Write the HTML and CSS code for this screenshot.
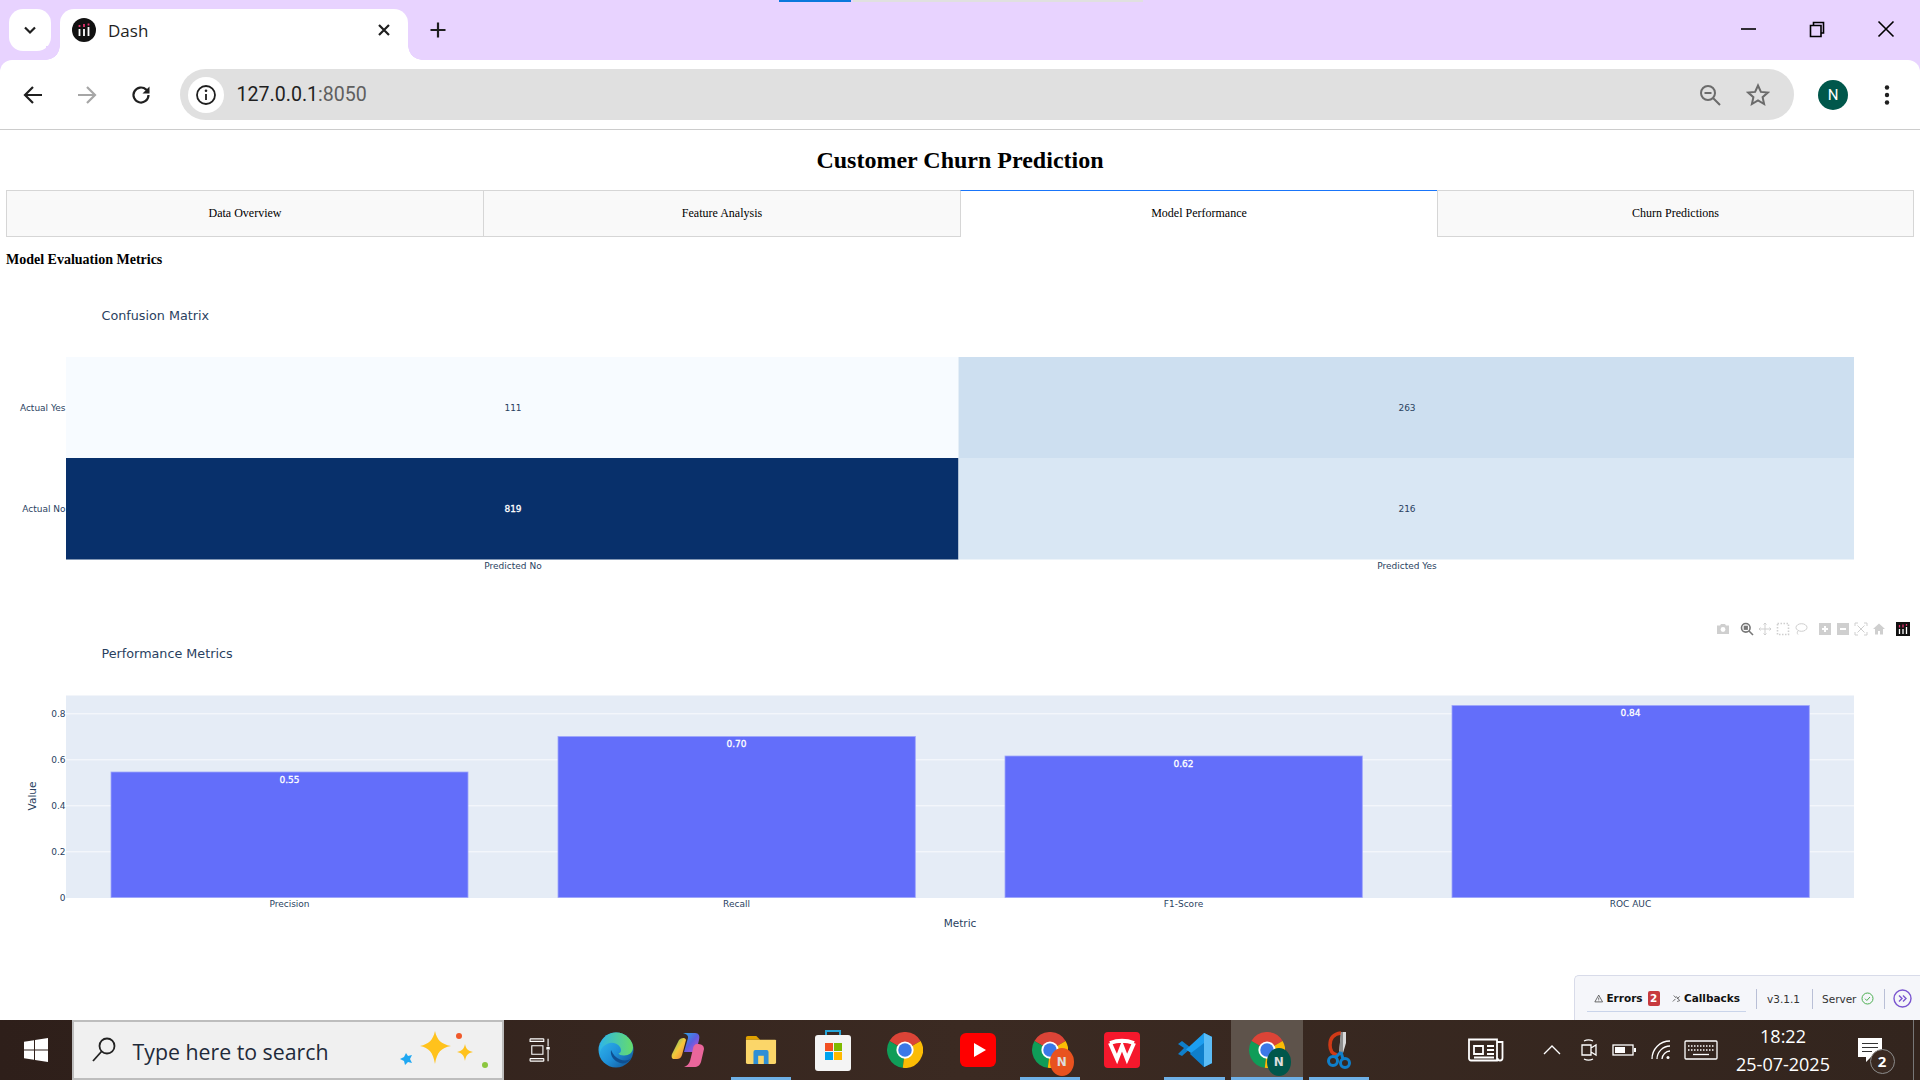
FILE: index.html
```html
<!DOCTYPE html>
<html lang="en">
<head>
<meta charset="utf-8">
<title>Dash</title>
<link rel="stylesheet" href="styles.css">
</head>
<body>
<svg class="defs" width="0" height="0" aria-hidden="true">
  <defs>
    <symbol id="chrome" viewBox="0 0 48 48">
      <path fill="#db4437" d="M24 24L3.2 12A24 24 0 0 1 44.8 12Z"/>
      <path fill="#0f9d58" d="M24 24L3.2 12A24 24 0 0 0 21 47.8Z"/>
      <path fill="#fbbc05" d="M24 24L44.8 12A24 24 0 0 1 21 47.8Z"/>
      <circle cx="24" cy="24" r="11.5" fill="#fff"/>
      <circle cx="24" cy="24" r="9" fill="#3b78e7"/>
    </symbol>
    <symbol id="dash" viewBox="0 0 24 24">
      <circle cx="12" cy="12" r="12" fill="#111"/>
      <path stroke="#fff" stroke-width="1.8" d="M7.5 11v7M12 11v7M16.500 9v9"/>
      <path stroke="#e6336f" stroke-width="1.8" d="M7.500 7v2M12 6v3M16.500 5.500v2"/>
    </symbol>
  </defs>
</svg>

<header class="tabstrip">
  <div class="progress"><span class="progress-done"></span><span class="progress-rest"></span></div>
  <button class="tab-search">
    <svg width="16" height="16" viewBox="0 0 16 16"><path class="ic-dark" d="M3 5.500l5 5 5-5"/></svg>
  </button>
  <div class="tab">
    <svg class="tab-fav" width="24" height="24"><use href="#dash"/></svg>
    <span class="tab-title">Dash</span>
    <svg class="tab-close" width="14" height="14" viewBox="0 0 14 14"><path class="ic-dark" d="M2 2l10 10M12 2L2 12"/></svg>
  </div>
  <svg class="tab-new" width="20" height="20" viewBox="0 0 20 20"><path class="ic-dark" d="M10 2.500v15M2.500 10h15"/></svg>
  <div class="winctl">
    <span class="winbtn"><svg width="18" height="18" viewBox="0 0 18 18"><path class="ic-win" d="M2 9h15"/></svg></span>
    <span class="winbtn"><svg width="18" height="18" viewBox="0 0 18 18"><path class="ic-win" d="M2.500 5.500h10.500v11h-10.500zM5.500 5.500v-3h10v10.500h-2.500"/></svg></span>
    <span class="winbtn"><svg width="18" height="18" viewBox="0 0 18 18"><path class="ic-win" d="M1.500 1.500l15 15M16.500 1.500l-15 15"/></svg></span>
  </div>
</header>

<nav class="toolbar">
  <span class="navbtn"><svg width="22" height="22" viewBox="0 0 22 22"><path class="ic-nav" d="M20 11H3M11 3l-8 8 8 8"/></svg></span>
  <span class="navbtn"><svg width="22" height="22" viewBox="0 0 22 22"><path class="ic-nav ic-off" d="M2 11h17M11 3l8 8-8 8"/></svg></span>
  <span class="navbtn"><svg width="22" height="22" viewBox="0 0 22 22"><path class="ic-nav" d="M18.500 11a7.500 7.500 0 1 1-2.300-5.400L18.500 8"/><path class="ic-solid" d="M19.500 2.500v7h-7z"/></svg></span>
  <div class="omnibox">
    <span class="site-info"><svg width="22" height="22" viewBox="0 0 22 22"><circle class="ic-nav ic-thin" cx="11" cy="11" r="9"/><path class="ic-nav ic-thin" d="M11 10v6"/><circle class="ic-solid" cx="11" cy="6.800" r="1.300"/></svg></span>
    <span class="url">127.0.0.1<span class="url-port">:8050</span></span>
    <span class="omni-btn"><svg width="24" height="24" viewBox="0 0 24 24"><circle class="ic-gray" cx="10" cy="10" r="7"/><path class="ic-gray" d="M6.500 10h7M15 15l7 7"/></svg></span>
    <span class="omni-btn"><svg width="24" height="24" viewBox="0 0 24 24"><path class="ic-gray" d="M12 2.500l2.900 6.400 6.900.7-5.200 4.600 1.500 6.800-6.100-3.500-6.100 3.500 1.500-6.800-5.200-4.600 6.900-.7z"/></svg></span>
  </div>
  <span class="navbtn"><span class="avatar">N</span></span>
  <span class="navbtn"><svg width="6" height="22" viewBox="0 0 6 22"><circle class="ic-solid" cx="3" cy="3.500" r="2.200"/><circle class="ic-solid" cx="3" cy="11" r="2.200"/><circle class="ic-solid" cx="3" cy="18.500" r="2.200"/></svg></span>
</nav>

<main class="page">
  <h1 class="page-title">Customer Churn Prediction</h1>
  <div class="tabs">
    <div class="dash-tab">Data Overview</div>
    <div class="dash-tab">Feature Analysis</div>
    <div class="dash-tab dash-tab-on">Model Performance</div>
    <div class="dash-tab">Churn Predictions</div>
  </div>
  <h3 class="section-title">Model Evaluation Metrics</h3>

  <section class="chart">
    <svg class="plot" width="1908" height="337.500" viewBox="0 0 1908 337.500">
      <text class="gtitle" x="95.500" y="37.500">Confusion Matrix</text>
      <rect x="60" y="75" width="892.500" height="101" fill="#f7fbff"/>
      <rect x="952.500" y="75" width="895.500" height="101" fill="#cddff0"/>
      <rect x="60" y="176" width="892.500" height="101.500" fill="#08306b"/>
      <rect x="952.500" y="176" width="895.500" height="101.500" fill="#d9e7f4"/>
      <text class="tick mid" x="507" y="129">111</text>
      <text class="tick mid" x="1401" y="129">263</text>
      <text class="tick mid white" x="507" y="230">819</text>
      <text class="tick mid" x="1401" y="230">216</text>
      <text class="tick end" x="59.500" y="129">Actual Yes</text>
      <text class="tick end" x="59.500" y="230">Actual No</text>
      <text class="tick mid" x="507" y="287">Predicted No</text>
      <text class="tick mid" x="1401" y="287">Predicted Yes</text>
    </svg>
  </section>

  <section class="chart">
    <div class="modebar">
      <svg class="mb mb-gap" width="14" height="14" viewBox="0 0 14 14"><path class="mb-f" d="M1 3.500h3l1-1.500h4l1 1.500h3v8.500H1z"/><circle cx="7" cy="7.500" r="2.400" fill="#fff"/></svg>
      <svg class="mb mb-on" width="14" height="14" viewBox="0 0 14 14"><circle class="mb-s" cx="5.800" cy="5.800" r="4.300"/><rect class="mb-f" x="3.700" y="3.700" width="4.200" height="4.200"/><path class="mb-s" d="M9 9l4 4"/></svg>
      <svg class="mb" width="14" height="14" viewBox="0 0 14 14"><path class="mb-s mb-thin" d="M7 1v12M1 7h12M5.500 2.500L7 1l1.500 1.500M5.500 11.500L7 13l1.500-1.500M2.500 5.500L1 7l1.500 1.500M11.500 5.500L13 7l-1.500 1.500"/></svg>
      <svg class="mb" width="14" height="14" viewBox="0 0 14 14"><rect class="mb-s mb-dash" x="1.500" y="1.500" width="11" height="11"/></svg>
      <svg class="mb mb-gap" width="14" height="14" viewBox="0 0 14 14"><ellipse class="mb-s mb-thin" cx="7.500" cy="5.500" rx="5.500" ry="3.800"/><path class="mb-s mb-thin" d="M4 9c-1 1-1 2.500 0 3.500"/></svg>
      <svg class="mb" width="14" height="14" viewBox="0 0 14 14"><path class="mb-f" fill-rule="evenodd" d="M1 1h12v12H1zM6 4v2H4v2h2v2h2V8h2V6H8V4z"/></svg>
      <svg class="mb" width="14" height="14" viewBox="0 0 14 14"><path class="mb-f" fill-rule="evenodd" d="M1 1h12v12H1zM4 6v2h6V6z"/></svg>
      <svg class="mb" width="14" height="14" viewBox="0 0 14 14"><path class="mb-s mb-thin" d="M1 4V1h3M10 1h3v3M13 10v3h-3M4 13H1v-3M3.500 3.500l7 7M10.500 3.500l-7 7"/></svg>
      <svg class="mb mb-gap" width="14" height="14" viewBox="0 0 14 14"><path class="mb-f" d="M7 1.500L1 7h2v5.500h3V9h2v3.500h3V7h2z"/></svg>
      <svg class="mb" width="14" height="14"><rect width="14" height="14" fill="#111"/><path stroke="#fff" stroke-width="1.300" d="M3.500 7v5M7 7v5M10.500 5v7"/><path stroke="#e6336f" stroke-width="1.300" d="M3.500 3v2.500M7 2.500v3M10.500 2v1.700"/></svg>
    </div>
    <svg class="plot" width="1908" height="337.500" viewBox="0 0 1908 337.500">
      <text class="gtitle" x="95.500" y="37.500">Performance Metrics</text>
      <rect x="60" y="75.500" width="1788" height="202.500" fill="#e5ecf6"/>
      <path class="grid" d="M60 93.800h1788M60 139.800h1788M60 185.800h1788M60 231.800h1788"/>
      <rect class="bar" x="105" y="152" width="357" height="125.500"/>
      <rect class="bar" x="552" y="116.500" width="357.300" height="161"/>
      <rect class="bar" x="999" y="136" width="357.300" height="141.500"/>
      <rect class="bar" x="1446" y="85.500" width="357.300" height="192"/>
      <text class="tick mid white" x="283.500" y="162.500">0.55</text>
      <text class="tick mid white" x="730.500" y="127">0.70</text>
      <text class="tick mid white" x="1177.500" y="146.500">0.62</text>
      <text class="tick mid white" x="1624.500" y="96">0.84</text>
      <text class="tick end" x="59.500" y="97">0.8</text>
      <text class="tick end" x="59.500" y="143">0.6</text>
      <text class="tick end" x="59.500" y="189">0.4</text>
      <text class="tick end" x="59.500" y="235">0.2</text>
      <text class="tick end" x="59.500" y="281">0</text>
      <text class="tick mid" x="283.500" y="287">Precision</text>
      <text class="tick mid" x="730.500" y="287">Recall</text>
      <text class="tick mid" x="1177.500" y="287">F1-Score</text>
      <text class="tick mid" x="1624.500" y="287">ROC AUC</text>
      <text class="axis mid" x="954" y="306.500">Metric</text>
      <text class="axis mid" x="0" y="0" transform="translate(29.500 176) rotate(-90)">Value</text>
    </svg>
  </section>

  <aside class="devtools">
    <div class="dt-group">
      <svg width="11" height="11" viewBox="0 0 11 11"><path class="dt-ic" d="M5.500 1.500L10 9.500H1zM5.500 4.500v2.500M5.500 8v.6"/></svg>
      <b class="dt-strong">Errors</b>
      <span class="dt-badge">2</span>
      <svg class="dt-plug" width="11" height="11" viewBox="0 0 11 11"><path class="dt-ic" d="M2 2l3 3M1 9l3-3M5 3l4 5M9 3L6 6M6 9l3-1"/></svg>
      <b class="dt-strong">Callbacks</b>
    </div>
    <span class="dt-cell dt-v">v3.1.1</span>
    <span class="dt-cell dt-server">Server
      <svg width="13" height="13" viewBox="0 0 13 13"><circle class="dt-ok" cx="6.500" cy="6.500" r="5.500"/><path class="dt-ok" d="M4 6.700l1.800 1.800L9 5"/></svg>
    </span>
    <span class="dt-cell dt-more">
      <svg width="19" height="19" viewBox="0 0 19 19"><circle class="dt-pur" cx="9.500" cy="9.500" r="8.500"/><path class="dt-pur" d="M6 6.500l3 3-3 3M10 6.500l3 3-3 3"/></svg>
    </span>
  </aside>
</main>

<footer class="taskbar">
  <span class="tb-start"><svg width="24" height="24" viewBox="0 0 24 24"><path fill="#fff" d="M0 3.700l10-1.400v9.200H0zM11 2.100L24 0v11.500H11zM0 12.500h10v9.200L0 20.300zM11 12.500h13V24l-13-2.100z"/></svg></span>
  <div class="tb-search">
    <svg width="26" height="28" viewBox="0 0 26 28"><circle class="ic-search" cx="16" cy="10" r="7.500"/><path class="ic-search" d="M10.500 15.500L2 25"/></svg>
    <span class="tb-search-text">Type here to search</span>
    <svg class="sparkle" width="92" height="42" viewBox="0 0 92 42">
      <path fill="#ffc21c" d="M36 2c2 9 6 13 16 15-10 2-14 6-16 18-2-12-6-16-15-18 9-2 13-6 15-15z"/>
      <path fill="#ffc21c" d="M66 15c1 5 3 7 8 8-5 1-7 3-8 9-1-6-3-8-8-9 5-1 7-3 8-8z"/>
      <path fill="#1ea7f2" d="M7 24l2 3 4-1-2 4 2 4-4-1-3 3-1-4-4-2 4-2z"/>
      <circle cx="60" cy="7" r="3" fill="#f0592a"/>
      <circle cx="86" cy="36" r="3" fill="#8cc63f"/>
    </svg>
  </div>
  <span class="tb-item tb-view"><svg width="23" height="24" viewBox="0 0 26 28"><path class="ic-tray" d="M2 1h16M2 27h16M4 9h13v10H4zM23 1v9M23 14v13M2 24h16M2 27v-3M18 27v-3M2 1v3h16V1"/><rect x="21" y="10.500" width="4" height="3" fill="#fff"/></svg></span>

  <span class="tb-item"><svg width="36" height="36" viewBox="0 0 36 36"><defs><linearGradient id="edge1" x1="0" y1="0" x2="1" y2="1"><stop offset="0" stop-color="#35c1f1"/><stop offset=".55" stop-color="#1e8fd8"/><stop offset="1" stop-color="#114a8b"/></linearGradient><linearGradient id="edge2" x1="0" y1="0" x2="1" y2="0"><stop offset="0" stop-color="#2fb6e6"/><stop offset="1" stop-color="#66dc6a"/></linearGradient></defs><circle cx="18" cy="18" r="17.500" fill="url(#edge1)"/><path fill="url(#edge2)" d="M2 14C5 4 12 .5 18 .5c10 0 17 8 17 15 0 5-4 8-9 8-3 0-5-1-5.500-2 3-1 3-4 1.500-6.500C19 11 14 10 10 11.500 6 13 3 16 2 20z"/><path fill="#0f4f91" d="M13 18c-1 6 3 11 9 13 5 1.500 9-1 11-5-3 3-7 3-11 1.500-4-1.500-7-5-9-9.500z"/></svg></span>
  <span class="tb-item"><svg width="34" height="36" viewBox="0 0 34 36"><defs><linearGradient id="cp1" x1="0" y1="0" x2="1" y2="1"><stop offset="0" stop-color="#27a9e8"/><stop offset=".5" stop-color="#5b5fe0"/><stop offset="1" stop-color="#d04fd0"/></linearGradient><linearGradient id="cp2" x1="0" y1="0" x2="1" y2="1"><stop offset="0" stop-color="#3fc37a"/><stop offset=".5" stop-color="#f6c83a"/><stop offset="1" stop-color="#f07a40"/></linearGradient></defs><path fill="url(#cp1)" d="M12 1h12c4 0 5 3 4 7l-3 12H13l4-14c.5-2-1-4-5-5z"/><path fill="url(#cp2)" d="M8 8c2-2 6-3 7 0l-4 15c-1 3-3 4-5 4H3c-2 0-3-2-2-5z"/><path fill="#e9669b" d="M26 12c4 0 7 1 7 5l-3 13c-1 3-3 5-7 5H13c3-1 5-3 6-6l3-12c0-3 2-5 4-5z"/></svg></span>
  <span class="tb-item tb-run"><svg width="32" height="32" viewBox="0 0 34 32"><path fill="#e0a100" d="M1 3a2 2 0 0 1 2-2h9l4 4h-15z"/><path fill="#fbd669" d="M1 5h31a1 1 0 0 1 1 1v23a2 2 0 0 1-2 2H3a2 2 0 0 1-2-2z"/><path fill="#2e8fd6" d="M9 31V18a2 2 0 0 1 2-2h12a2 2 0 0 1 2 2v13h-5v-9h-6v9z"/></svg></span>
  <span class="tb-item"><svg width="36" height="42" viewBox="0 0 36 42"><path fill="none" stroke="#26a5d8" stroke-width="2" d="M11 10V2h14v8"/><rect y="6" width="36" height="36" rx="3" fill="#f4f4f4"/><rect x="10" y="14" width="8" height="8" fill="#f25022"/><rect x="19" y="14" width="8" height="8" fill="#7fba00"/><rect x="10" y="23" width="8" height="8" fill="#00a4ef"/><rect x="19" y="23" width="8" height="8" fill="#ffb900"/></svg></span>
  <span class="tb-item"><svg width="36" height="36"><use href="#chrome"/></svg></span>
  <span class="tb-item"><svg width="36" height="34" viewBox="0 0 36 34"><rect width="36" height="34" rx="6" fill="#f00"/><path fill="#fff" d="M14 10l12 7-12 7z"/></svg></span>
  <span class="tb-item tb-run tb-badged"><svg width="36" height="36"><use href="#chrome"/></svg><span class="tb-n tb-n-orange">N</span></span>
  <span class="tb-item"><svg width="36" height="36" viewBox="0 0 36 36"><rect width="36" height="36" rx="4" fill="#f5182c"/><path fill="none" stroke="#fff" stroke-width="4" d="M6 11l7 16 5-13 5 13 7-16M6 11c8-3 16-3 24 0"/></svg></span>
  <span class="tb-item tb-run"><svg width="36" height="36" viewBox="0 0 36 36"><path fill="#0f7fcb" d="M1 12l4-3 9 7-9 8-4-2 6-6zM27 1l8 4v26l-8 4-14-13z"/><path fill="#1c9ef0" d="M27 1l8 4v26l-8 4V11L14 21l-5-3.500z"/><path fill="#5cbcf5" d="M27 1l8 4v26l-8 4z"/></svg></span>
  <span class="tb-item tb-run tb-active tb-badged"><svg width="36" height="36"><use href="#chrome"/></svg><span class="tb-n tb-n-green">N</span></span>
  <span class="tb-item tb-run"><svg width="24" height="38" viewBox="0 0 24 38"><path fill="none" stroke="#d03a17" stroke-width="3.500" d="M14 2C6 3 3 8 3 14s2 9 7 10"/><path fill="#d9d9d9" d="M14 1h5v11l-3 10h-4z"/><path fill="#8f8f8f" d="M14 1h2v21h-4z"/><circle cx="6" cy="30" r="4.500" fill="none" stroke="#0f7fcb" stroke-width="3"/><circle cx="18" cy="32" r="4.500" fill="none" stroke="#0f7fcb" stroke-width="3"/><path stroke="#0f7fcb" stroke-width="3" d="M8 27l6-6M16 28l-2-7"/></svg></span>

  <div class="tray">
    <span class="tr tr-news"><svg width="36" height="24" viewBox="0 0 36 24"><path class="ic-tray2" d="M1 1.500h28v21H3a2 2 0 0 1-2-2zM29 4h5.500v16a2.500 2.500 0 0 1-5 0M6 8h9v8H6zM19 8h7M19 12h7M19 16h7M6 19.500h20"/></svg></span>
    <span class="tr tr-caret"><svg width="18" height="10" viewBox="0 0 18 10"><path class="ic-tray" d="M1 9l8-8 8 8"/></svg></span>
    <span class="tr tr-meet"><svg width="18" height="24" viewBox="0 0 18 24"><path class="ic-tray" d="M2 7h9v10H2zM11 10l5-3v10l-5-3M4 3c3-1.500 6-1.500 9 0M4 21c3 1.500 6 1.500 9 0"/></svg></span>
    <span class="tr tr-batt"><svg width="24" height="12" viewBox="0 0 24 12"><rect class="ic-tray" x="1" y="1" width="20" height="10"/><rect x="3" y="3" width="10" height="6" fill="#fff"/><rect x="22" y="4" width="2" height="4" fill="#fff"/></svg></span>
    <span class="tr tr-wifi"><svg width="20" height="20" viewBox="0 0 20 20"><path class="ic-tray" d="M1 19C1 9 9 1 19 1M6 19c0-7 6-13 13-13M11 19c0-4 4-8 8-8"/><circle cx="17" cy="17.500" r="1.500" fill="#fff"/></svg></span>
    <span class="tr tr-kbd"><svg width="34" height="20" viewBox="0 0 34 20"><rect class="ic-tray" x="1" y="1" width="32" height="18" rx="1"/><path class="ic-tray ic-dots" d="M4 6h26M4 10h26"/><path class="ic-tray" d="M9 14.500h16"/></svg></span>
    <div class="tr tr-clock"><span>18:22</span><span>25-07-2025</span></div>
    <span class="tr tr-note">
      <svg width="24" height="24" viewBox="0 0 24 24"><path fill="#fff" d="M0 0h24v19H13l-5 5v-5H0z"/><path stroke="#333" stroke-width="1" d="M4 5.500h16M4 9.500h16M4 13.500h10"/></svg>
      <span class="tr-count">2</span>
    </span>
    <span class="tr-edge"></span>
  </div>
</footer>
</body>
</html>
```

FILE: styles.css
```css
* { box-sizing: border-box; }
html, body { margin: 0; height: 100%; }
body {
  width: 1920px;
  height: 1080px;
  overflow: hidden;
  display: flex;
  flex-direction: column;
  background: #fff;
  font-family: "Liberation Serif", serif;
}
.defs { position: absolute; }

/* ---------- browser tab strip ---------- */
.tabstrip {
  position: relative;
  height: 60px;
  flex: none;
  display: flex;
  align-items: flex-start;
  padding: 9px 0 0 9px;
  background: #e8d3ff;
}
.progress { position: absolute; top: 0; left: 779px; display: flex; height: 2px; }
.progress-done { width: 72px; background: #0a78dc; }
.progress-rest { width: 290px; margin-left: 2px; background: #e0e0e0; }
.tab-search {
  width: 42px; height: 42px; padding: 0; border: 0;
  border-radius: 14px; background: #fff;
  display: flex; align-items: center; justify-content: center;
}
.tab {
  position: relative;
  width: 348px; height: 51px; margin-left: 9px;
  padding: 0 17px 9px 12px;
  display: flex; align-items: center;
  background: #fff;
  border-radius: 14px 14px 0 0;
}
.tab::before, .tab::after {
  content: ""; position: absolute; bottom: 0; width: 14px; height: 14px;
  background: radial-gradient(circle at var(--cx) 0, #e8d3ff 13.500px, #fff 14px);
}
.tab::before { left: -14px; --cx: 0; }
.tab::after { right: -14px; --cx: 100%; }
.tab-title {
  flex: 1; margin-left: 12px;
  font: 17px "Open Sans", sans-serif; color: #1f1f1f;
}
.tab-new { margin: 11px 0 0 20px; }
.ic-dark { fill: none; stroke: #1f1f1f; stroke-width: 2.200; }
.winctl { margin-left: auto; margin-top: -9px; display: flex; }
.winbtn { width: 69px; height: 58px; display: flex; align-items: center; justify-content: center; }
.ic-win { fill: none; stroke: #000; stroke-width: 1.600; }

/* ---------- browser toolbar ---------- */
.toolbar {
  height: 70px; flex: none;
  padding: 0 6px 0;
  display: flex; align-items: center;
  background: #fff;
  border-bottom: 1px solid #ccc;
  border-radius: 12px 12px 0 0;
  box-shadow: 0 -12px 0 0 #e8d3ff;
}
.navbtn { width: 54px; height: 54px; flex: none; display: flex; align-items: center; justify-content: center; }
.ic-nav { fill: none; stroke: #1f1f1f; stroke-width: 2.200; }
.ic-thin { stroke-width: 1.800; }
.ic-off { stroke: #a6a6a6; }
.ic-solid { fill: #1f1f1f; }
.ic-gray { fill: none; stroke: #6b6b6b; stroke-width: 2; }
.omnibox {
  flex: 1; height: 51px;
  margin: 0 12px;
  padding: 0 12px 0 8px;
  display: flex; align-items: center;
  background: #e0e0e0;
  border-radius: 26px;
}
.site-info {
  width: 36px; height: 36px; border-radius: 50%;
  background: #fff;
  display: flex; align-items: center; justify-content: center;
}
.url { flex: 1; margin-left: 12.500px; font: 19.600px Roboto, sans-serif; color: #1f1f1f; }
.url-port { color: #5f5f5f; }
.omni-btn { width: 48px; display: flex; justify-content: center; }
.avatar {
  width: 30px; height: 30px; border-radius: 50%;
  background: #00574b; color: #fff;
  font: 15px/30px Roboto, sans-serif; text-align: center;
}

/* ---------- dash page ---------- */
.page {
  position: relative;
  flex: 1;
  padding: 0 6px;
  color: #000;
  min-height: 0;
}
.page-title {
  margin: 0; height: 60px;
  font-size: 24px; font-weight: 700; line-height: 60px; text-align: center;
}
.tabs { display: grid; grid-template-columns: repeat(4, 1fr); height: 47px; }
.dash-tab {
  display: flex; align-items: center; justify-content: center;
  font-size: 12px;
  background: #f9f9f9;
  border: 1px solid #d6d6d6;
  border-right: 0;
}
.dash-tab:last-child { border-right: 1px solid #d6d6d6; }
.dash-tab-on {
  background: #fff;
  border-top: 1px solid #1975fa;
  border-bottom: 0;
  padding-bottom: 1px;
}
.section-title {
  margin: 15px 0 14px;
  font-size: 14px; line-height: 16px; font-weight: 700;
}
.chart { position: relative; height: 337.500px; }
.plot { display: block; font-family: "DejaVu Sans", Verdana, sans-serif; }
.gtitle { font-size: 12.750px; fill: #2a3f5f; }
.tick { font-size: 9px; fill: #2a3f5f; }
.axis { font-size: 10.500px; fill: #2a3f5f; }
.mid { text-anchor: middle; }
.end { text-anchor: end; }
.white { fill: #fff; stroke: #fff; stroke-width: .3; }
.grid { stroke: #fff; stroke-width: .75; fill: none; }
.bar { fill: #636efa; stroke: #9ea6fb; stroke-width: .8; }

.modebar {
  position: absolute; top: 2.500px; right: 4px;
  display: flex; align-items: center; gap: 4px;
}
.mb-gap { margin-right: 6px; }
.mb-f { fill: #cfcfcf; }
.mb-s { fill: none; stroke: #cfcfcf; stroke-width: 1.600; }
.mb-thin { stroke-width: 1; }
.mb-dash { stroke-dasharray: 1.500 1.500; }
.mb-on .mb-f { fill: #777; }
.mb-on .mb-s { stroke: #777; }

/* ---------- dash dev tools ---------- */
.devtools {
  position: absolute; right: 0; bottom: 0;
  width: 346px; height: 45px;
  padding: 9px 0 8px 12px;
  display: flex; align-items: center;
  background: #f5f6fa;
  border: 1px solid #d8dbe9;
  border-width: 1px 0 0 1px;
  border-radius: 5px 0 0 0;
  font: 10.500px "DejaVu Sans", Verdana, sans-serif;
  color: #333;
}
.dt-group {
  width: 159px; height: 26px;
  padding: 0 6px 0 7px;
  display: flex; align-items: center;
  border-bottom: 1px solid #c9d4ea;
}
.dt-strong { margin-left: 3px; color: #111; font-size: 10.500px; }
.dt-badge {
  width: 14px; height: 15px; margin-left: 5px;
  border-radius: 2px; background: #c73a3e; color: #fff;
  font-weight: 700; font-size: 10.500px; line-height: 15px; text-align: center;
}
.dt-plug { margin-left: 12px; }
.dt-ic { fill: none; stroke: #444; stroke-width: .9; }
.dt-cell {
  height: 20px;
  display: flex; align-items: center;
  border-left: 1px solid #b9bfd6;
}
.dt-v { width: 56px; margin-left: 10px; padding-left: 10px; }
.dt-server { width: 72px; padding-left: 9px; gap: 5px; }
.dt-more { padding-left: 8px; }
.dt-ok { fill: none; stroke: #4caf50; stroke-width: 1; }
.dt-pur { fill: none; stroke: #7a55d0; stroke-width: 1.400; }

/* ---------- windows taskbar ---------- */
.taskbar {
  height: 60px; flex: none;
  display: flex; align-items: stretch;
  background: linear-gradient(90deg, #2e1f1a, #3b2a22 50%, #33251e);
}
.tb-start { width: 72px; display: flex; align-items: center; justify-content: center; }
.tb-search {
  width: 432px;
  padding: 0 11px 0 17px;
  display: flex; align-items: center;
  background: #f0f0f0;
  border: 2px solid #bdbdbd;
}
.tb-search-text {
  flex: 1; margin: 2px 0 0 15.500px;
  font: 21.300px "Open Sans", sans-serif; color: #1f2a3a;
}
.ic-search { fill: none; stroke: #222; stroke-width: 1.800; }
.sparkle { flex: none; }
.tb-item {
  position: relative;
  width: 72.300px; flex: none;
  display: flex; align-items: center; justify-content: center;
}
.tb-view { width: 70px; margin-right: 6px; }
.tb-run::after {
  content: ""; position: absolute; left: 6px; right: 6px; bottom: 0; height: 3px;
  background: #6eb0e6;
}
.tb-active { background: #5e534b; }
.tb-active::after { left: 0; right: 0; }
.tb-n {
  position: absolute; left: 36px; top: 28px;
  width: 24px; height: 28px; border-radius: 50%;
  color: #ddd; font: 700 12px/28px "DejaVu Sans", sans-serif; text-align: center;
}
.tb-n-orange { background: #e8521f; }
.tb-n-green { background: #00574b; }

.tray { margin-left: auto; display: flex; align-items: center; color: #fff; }
.tr { display: flex; align-items: center; justify-content: center; flex: none; }
.tr-news { width: 72px; }
.tr-caret { width: 36px; margin-left: 12px; }
.tr-meet { width: 38px; }
.tr-batt { width: 32px; }
.tr-wifi { width: 42px; }
.tr-kbd { width: 38px; }
.tr-clock {
  width: 126px; flex-direction: column;
  font: 18px/28px "Open Sans", sans-serif;
}
.tr-note { position: relative; width: 48px; }
.tr-count {
  position: absolute; left: 23.500px; top: 10.500px;
  width: 25px; height: 25px; border-radius: 50%;
  background: #3a2a22; border: 1px solid #8c8c8c;
  font: 700 15px/23px "Open Sans", sans-serif; text-align: center;
}
.tr-edge { width: 26px; height: 60px; }
.tr-edge::after { content: ""; display: block; width: 1px; height: 60px; margin-left: 19px; background: #777; }
.ic-tray { fill: none; stroke: #fff; stroke-width: 1.300; }
.ic-tray2 { fill: none; stroke: #fff; stroke-width: 1.800; }
.ic-dots { stroke-dasharray: 1.500 1.500; }
```
